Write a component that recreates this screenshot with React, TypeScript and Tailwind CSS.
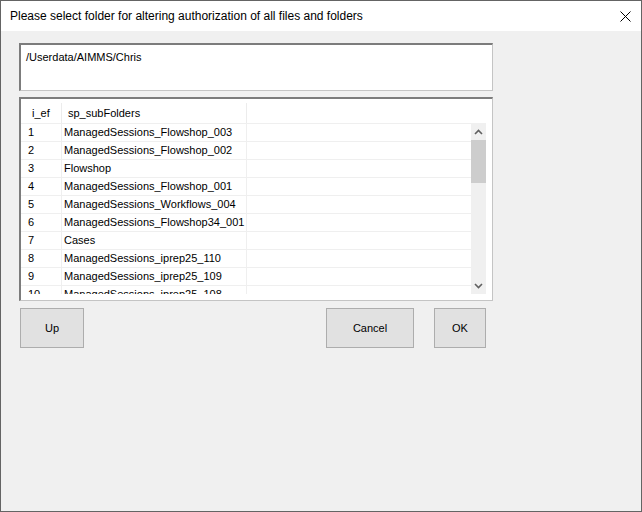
import React from 'react'

const rows: [string, string][] = [
    ['1', 'ManagedSessions_Flowshop_003'],
    ['2', 'ManagedSessions_Flowshop_002'],
    ['3', 'Flowshop'],
    ['4', 'ManagedSessions_Flowshop_001'],
    ['5', 'ManagedSessions_Workflows_004'],
    ['6', 'ManagedSessions_Flowshop34_001'],
    ['7', 'Cases'],
    ['8', 'ManagedSessions_iprep25_110'],
    ['9', 'ManagedSessions_iprep25_109'],
    ['10', 'ManagedSessions_iprep25_108'],
]

function Chevron({ up }: { up: boolean }) {
    return (
        <svg width="9" height="6" viewBox="0 0 9 6" className="block">
            <path
                d={up ? 'M1 5 L4.5 1.5 L8 5' : 'M1 1 L4.5 4.5 L8 1'}
                fill="none"
                stroke="#606060"
                strokeWidth="1.6"
            />
        </svg>
    )
}

function WinButton({ label, width }: { label: string; width: string }) {
    return (
        <button
            className={`${width} h-[40px] bg-[#e1e1e1] border border-[#adadad] text-[11px] text-black flex items-center justify-center`}
        >
            {label}
        </button>
    )
}

export default function App() {
    return (
        <div
            className="w-[642px] h-[512px] border border-[#646464] bg-[#f0f0f0] flex flex-col"
            style={{ fontFamily: '"Liberation Sans", Arial, sans-serif' }}
        >
            {/* title bar */}
            <div className="h-[30px] bg-white flex items-center justify-between pl-[9px] pr-[9px] shrink-0">
                <span
                    className="text-[12px] text-black"
                    style={{ fontFamily: '"Liberation Sans", Arial, sans-serif' }}
                >
                    Please select folder for altering authorization of all files and folders
                </span>
                <svg width="11" height="11" viewBox="0 0 11 11" className="mr-[1px]">
                    <path d="M0.5 0.5 L10.5 10.5 M10.5 0.5 L0.5 10.5" stroke="#000" strokeWidth="1" />
                </svg>
            </div>

            {/* body */}
            <div className="flex flex-col pl-[18px] pt-[12px]">
                {/* path box */}
                <div className="w-[474px] h-[48px] bg-white border-t-2 border-l-2 border-t-[#7c7c7c] border-l-[#7c7c7c] border-r border-b border-r-[#c4c4c4] border-b-[#c4c4c4] pl-[5px] pt-[6px]">
                    <div className="text-[11px] leading-[13px] text-black">/Userdata/AIMMS/Chris</div>
                </div>

                {/* table box */}
                <div className="mt-[6px] w-[474px] h-[204px] bg-white border-t-2 border-l-2 border-t-[#7c7c7c] border-l-[#7c7c7c] border-r border-b border-r-[#c4c4c4] border-b-[#c4c4c4] flex flex-col">
                    {/* header */}
                    <div className="h-[24px] flex items-end shrink-0 text-[11px] text-black">
                        <div className="w-[41px] h-[20px] border-r border-[#ececec] pl-[11px] flex items-center">i_ef</div>
                        <div className="w-[185px] h-[20px] border-r border-[#ececec] pl-[6px] flex items-center">sp_subFolders</div>
                    </div>
                    {/* body */}
                    <div className="flex">
                        <div className="w-[450px] h-[171px] overflow-hidden">
                            {rows.map(([i, name]) => (
                                <div key={i} className="h-[18px] flex border-t border-[#efefef] text-[11px] text-black">
                                    <div className="w-[41px] border-r border-[#efefef] pl-[7px] flex items-center">{i}</div>
                                    <div className="w-[185px] border-r border-[#efefef] pl-[2px] flex items-center whitespace-nowrap">{name}</div>
                                    <div className="flex-1" />
                                </div>
                            ))}
                        </div>
                        <div className="w-[15px] h-[171px] bg-[#f0f0f0] flex flex-col">
                            <div className="h-[17px] flex items-center justify-center">
                                <Chevron up />
                            </div>
                            <div className="h-[43px] bg-[#cdcdcd]" />
                            <div className="flex-1" />
                            <div className="h-[17px] flex items-center justify-center">
                                <Chevron up={false} />
                            </div>
                        </div>
                    </div>
                </div>

                {/* buttons */}
                <div className="mt-[7px] flex pl-[1px]">
                    <WinButton label="Up" width="w-[64px]" />
                    <div className="w-[242px]" />
                    <WinButton label="Cancel" width="w-[88px]" />
                    <div className="w-[20px]" />
                    <WinButton label="OK" width="w-[52px]" />
                </div>
            </div>
        </div>
    )
}
